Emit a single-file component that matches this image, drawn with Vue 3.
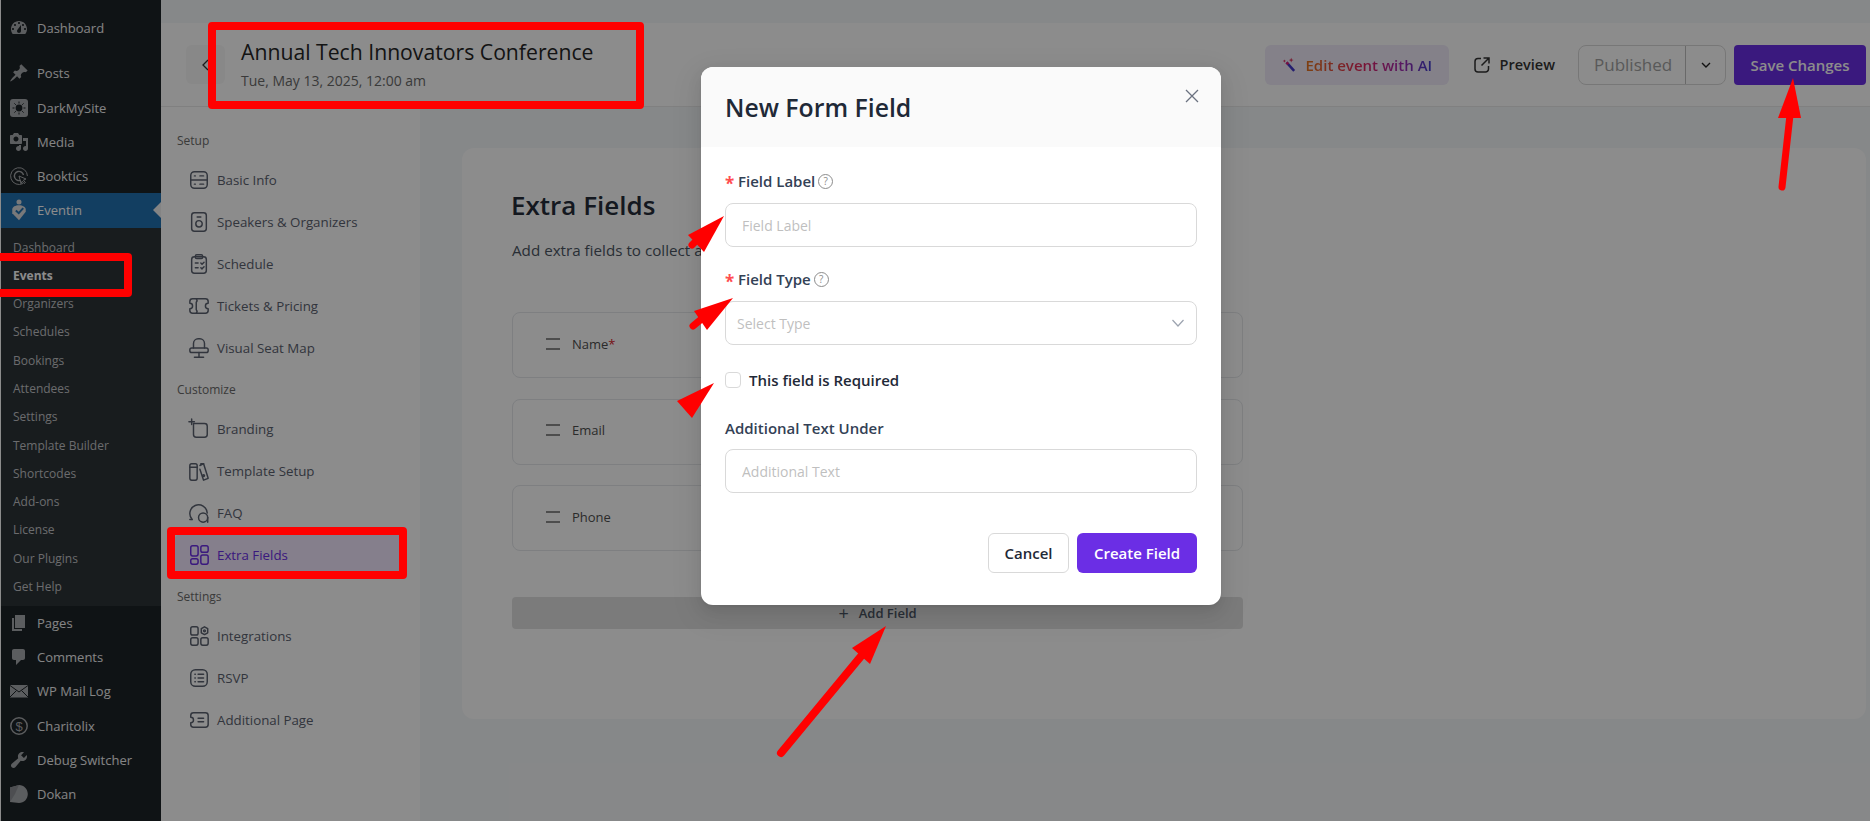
<template>
  <div class="page">
    <aside class="wp-menu">
      <template v-for="item in wpMenu" :key="item.name">
        <div class="wp-item" :class="{ active: item.active, gap: item.gap }">
          <span class="wp-icon">
            <svg v-if="item.kind === 'dashicon'" viewBox="0 0 20 20" width="20" height="20">
              <path :d="item.d" fill="#a7aaad" fill-rule="evenodd" />
            </svg>
            <svg v-else-if="item.kind === 'sun'" viewBox="0 0 20 20" width="20" height="20">
              <rect x="1" y="1" width="18" height="18" rx="3" fill="#a7aaad" />
              <circle cx="10" cy="10" r="3.4" fill="#1d2327" />
              <path d="M10 3.5v2M10 14.5v2M3.5 10h2M14.5 10h2M5.4 5.4l1.4 1.4M13.2 13.2l1.4 1.4M5.4 14.6l1.4-1.4M13.2 6.8l1.4-1.4" stroke="#1d2327" stroke-width="1" />
            </svg>
            <svg v-else-if="item.kind === 'target'" viewBox="0 0 20 20" width="20" height="20" fill="none" stroke="#a7aaad">
              <path d="M14 17.5A8.4 8.4 0 1 1 18.4 10" stroke-width="1" />
              <path d="M11.6 14.3A4.6 4.6 0 1 1 14.5 9" stroke-width="1.4" />
              <path d="M10 10l7 3-2.6 1.2 2 2.4-1.2 1-2-2.4L12 17.6z" stroke-width="1" />
            </svg>
            <svg v-else-if="item.kind === 'eventin'" viewBox="0 0 20 24" width="18" height="22">
              <circle cx="10" cy="3" r="2.8" fill="#dcdcde" />
              <path d="M2.500 11.500C2.500 8.500 6 6.800 10 6.800s7.500 2 7.500 4.700v2.500L10 23.500 2.500 15.500z" fill="#dcdcde" />
              <path d="M6.500 12.500l3.200 3 5-5.500" fill="none" stroke="#2271b1" stroke-width="2.200" />
            </svg>
            <svg v-else-if="item.kind === 'mail'" viewBox="0 0 20 20" width="20" height="20">
              <rect x="1" y="4" width="18" height="12.5" fill="#a7aaad" />
              <path d="M1 4.5l9 6.5 9-6.5M1 16l6.5-6.5M19 16l-6.5-6.5" fill="none" stroke="#1d2327" stroke-width="1" />
            </svg>
            <svg v-else-if="item.kind === 'dollar'" viewBox="0 0 20 20" width="20" height="20">
              <circle cx="10" cy="10" r="8.2" fill="none" stroke="#a7aaad" stroke-width="1.5" />
              <text x="10" y="14.6" text-anchor="middle" font-size="13" font-family="Liberation Sans, sans-serif" fill="#a7aaad">$</text>
            </svg>
            <svg v-else viewBox="0 0 20 20" width="20" height="20">
              <path d="M1 3.500L10 1c5 0 8.800 4 8.800 9s-3.800 9-8.800 9c-3 0-6-1-9-1z" fill="#a7aaad" />
              <path d="M1 3.500L10 1 6 10l-5 8z" fill="#8c8f94" />
            </svg>
          </span>
          <span class="wp-name">{{ item.name }}</span>
          <span v-if="item.active" class="wp-notch"></span>
        </div>
        <div v-if="item.active" class="wp-sub">
          <div v-for="sub in wpSubmenu" :key="sub" class="wp-sub-item" :class="{ current: sub === 'Events' }">{{ sub }}</div>
        </div>
      </template>
    </aside>

    <main class="main">
      <div class="top-band"></div>
      <header class="event-bar">
        <button class="back-btn">
          <svg viewBox="0 0 16 16" width="16" height="16"><path d="M10 3L5 8l5 5" fill="none" stroke="#333" stroke-width="1.3" /></svg>
        </button>
        <div class="event-head">
          <div class="event-title">Annual Tech Innovators Conference</div>
          <div class="event-date">Tue, May 13, 2025, 12:00 am</div>
        </div>
        <div class="event-actions">
          <button class="ai-btn">
            <svg viewBox="0 0 20 20" width="17" height="17">
              <path d="M6.500 7.500l9 10" stroke="#4338ca" stroke-width="3" />
              <path d="M6.500 7.500l2 2.200" stroke="#e11d74" stroke-width="3" />
              <path d="M12 2l.8 2 2 .8-2 .8-.8 2-.8-2-2-.8 2-.8zM4 4l.6 1.400L6 6l-1.400.6L4 8l-.6-1.400L2 6l1.400-.6z" fill="#d9365f" />
            </svg>
            <span class="ai-text">Edit event with AI</span>
          </button>
          <button class="preview-btn">
            <svg viewBox="0 0 18 18" width="18" height="18" fill="none" stroke="#333" stroke-width="1.5">
              <path d="M8 2.500H5a3 3 0 0 0-3 3V13a3 3 0 0 0 3 3h7.500a3 3 0 0 0 3-3v-3M10.500 2H16v5.500M16 2L8.500 9.500" />
            </svg>
            Preview
          </button>
          <div class="status-group">
            <span class="status-name">Published</span>
            <span class="status-caret">
              <svg viewBox="0 0 12 12" width="12" height="12"><path d="M2 4l4 4 4-4" fill="none" stroke="#222" stroke-width="1.400" /></svg>
            </span>
          </div>
          <button class="save-btn">Save Changes</button>
        </div>
      </header>

      <div class="workspace">
        <nav class="side-panel">
          <section v-for="group in panelGroups" :key="group.title" class="panel-group">
            <div class="panel-title">{{ group.title }}</div>
            <div v-for="link in group.links" :key="link.name" class="panel-link" :class="{ selected: link.name === 'Extra Fields' }">
              <svg viewBox="0 0 24 24" width="22" height="22" fill="none" stroke="currentColor" stroke-width="1.600" stroke-linecap="round" stroke-linejoin="round">
                <path v-for="d in link.paths" :key="d" :d="d" />
              </svg>
              <span>{{ link.name }}</span>
            </div>
          </section>
        </nav>

        <div class="content">
          <div class="card">
            <h1 class="card-title">Extra Fields</h1>
            <p class="card-sub">Add extra fields to collect additional information from your attendees</p>
            <div class="field-list">
              <div v-for="row in fieldRows" :key="row.name" class="field-row">
                <span class="drag"></span>
                <span class="field-name">{{ row.name }}<em v-if="row.required">*</em></span>
              </div>
            </div>
            <div class="add-bar"><span class="plus">+</span>Add Field</div>
          </div>
        </div>
      </div>
    </main>

    <div class="mask"></div>

    <div class="modal">
      <div class="modal-head">
        <h2>New Form Field</h2>
        <svg class="close" viewBox="0 0 16 16" width="16" height="16"><path d="M2 2l12 12M14 2L2 14" stroke="#6b7280" stroke-width="1.300" /></svg>
      </div>
      <form class="modal-body" @submit.prevent>
        <div class="form-label"><i>*</i>Field Label<span class="help">?</span></div>
        <input class="text-input" placeholder="Field Label" />
        <div class="form-label second"><i>*</i>Field Type<span class="help">?</span></div>
        <div class="select-box">
          <span>Select Type</span>
          <svg viewBox="0 0 14 14" width="14" height="14"><path d="M1.500 4l5.500 6 5.500-6" fill="none" stroke="#9ca3af" stroke-width="1.200" /></svg>
        </div>
        <label class="check-row"><span class="check"></span>This field is Required</label>
        <div class="form-label plain">Additional Text Under</div>
        <input class="text-input" placeholder="Additional Text" />
        <div class="modal-foot">
          <button class="cancel">Cancel</button>
          <button class="create">Create Field</button>
        </div>
      </form>
    </div>

    <!-- red markup drawn on top of the screenshot -->
    <svg class="markup" viewBox="0 0 1870 821" width="1870" height="821">
      <g fill="none" stroke="#ff0000" stroke-width="8" stroke-linejoin="round">
        <rect x="212" y="26" width="428" height="79" />
        <rect x="-4" y="257" width="132" height="36" />
        <rect x="171" y="531" width="232" height="44" />
      </g>
      <g stroke="#ff0000" stroke-linecap="round" fill="none">
        <path d="M1790 115L1782 187" stroke-width="7" />
        <path d="M862 655L781 753" stroke-width="8" />
        <path d="M705 232L692 245" stroke-width="7" />
        <path d="M710 312L693 326" stroke-width="7" />
      </g>
      <g fill="#ff0000">
        <polygon points="1793,78 1778,118 1801,118" />
        <polygon points="886,626 852,648 870,664" />
        <polygon points="724,216 688,235 704,252" />
        <polygon points="733,298 694,311 707,330" />
        <polygon points="714,383 677,401 692,418" />
      </g>
    </svg>
  </div>
</template>

<script setup>
const rr = (x, y, w, h, r) =>
  `M${x + r} ${y}h${w - 2 * r}a${r} ${r} 0 0 1 ${r} ${r}v${h - 2 * r}a${r} ${r} 0 0 1 -${r} ${r}h-${w - 2 * r}a${r} ${r} 0 0 1 -${r} -${r}v-${h - 2 * r}a${r} ${r} 0 0 1 ${r} -${r}z`
const circle = (cx, cy, r) => `M${cx - r} ${cy}a${r} ${r} 0 1 0 ${2 * r} 0a${r} ${r} 0 1 0 -${2 * r} 0z`

const wpMenu = [
  { name: 'Dashboard', kind: 'dashicon', d: 'M3.76 16h12.48c1.1-1.37 1.76-3.11 1.76-5 0-4.420-3.58-8-8-8s-8 3.580-8 8c0 1.890.66 3.630 1.760 5zM10 4c.55 0 1 .45 1 1s-.45 1-1 1-1-.45-1-1 .45-1 1-1zM6 6c.55 0 1 .45 1 1s-.45 1-1 1-1-.45-1-1 .45-1 1-1zm8 0c.55 0 1 .45 1 1s-.45 1-1 1-1-.45-1-1 .45-1 1-1zm-5.370 5.550L12 7v6c0 1.100-.9 2-2 2s-2-.9-2-2c0-.57.24-1.080.63-1.450zM4 10c.55 0 1 .45 1 1s-.45 1-1 1-1-.45-1-1 .45-1 1-1zm12 0c.55 0 1 .45 1 1s-.45 1-1 1-1-.45-1-1 .45-1 1-1z' },
  { name: 'Posts', gap: true, kind: 'dashicon', d: 'M10.440 3.020l1.820-1.820 6.360 6.350-1.830 1.820c-1.050-.68-2.480-.57-3.410.36l-.75.75c-.92.93-1.040 2.350-.35 3.410l-1.830 1.820-2.410-2.410-2.800 2.790c-.42.42-3.380 2.710-3.800 2.290s1.860-3.390 2.280-3.810l2.790-2.790L4.100 9.360l1.830-1.820c1.050.69 2.480.57 3.400-.36l.75-.75c.93-.92 1.050-2.350.36-3.410z' },
  { name: 'DarkMySite', kind: 'sun' },
  { name: 'Media', kind: 'dashicon', d: 'M13 11V4c0-.55-.45-1-1-1h-1.670L9 1H5L3.670 3H2c-.55 0-1 .45-1 1v7c0 .55.45 1 1 1h10c.55 0 1-.45 1-1zM7 4.500c1.380 0 2.500 1.120 2.500 2.500S8.380 9.500 7 9.500 4.500 8.380 4.500 7 5.620 4.500 7 4.500zM14 6h5v10.500c0 1.380-1.120 2.500-2.500 2.500S14 17.880 14 16.500s1.120-2.500 2.500-2.500c.17 0 .34.02.5.05V9h-3V6zm-4 8.050V13h2v3.500c0 1.380-1.120 2.500-2.500 2.500S7 17.880 7 16.500 8.120 14 9.500 14c.17 0 .34.02.5.05z' },
  { name: 'Booktics', kind: 'target' },
  { name: 'Eventin', kind: 'eventin', active: true },
  { name: 'Pages', kind: 'dashicon', d: 'M6 15V2h10v13H6zm-1 1h8v2H3V5h2v11z' },
  { name: 'Comments', kind: 'dashicon', d: 'M5 2h9c1.100 0 2 .9 2 2v7c0 1.100-.9 2-2 2h-2l-5 5v-5H5c-1.100 0-2-.9-2-2V4c0-1.100.9-2 2-2z' },
  { name: 'WP Mail Log', kind: 'mail' },
  { name: 'Charitolix', kind: 'dollar' },
  { name: 'Debug Switcher', kind: 'dashicon', d: 'M16.680 9.770c-1.340 1.340-3.300 1.670-4.950.99l-5.410 6.520c-.99.99-2.590.99-3.580 0s-.99-2.590 0-3.570l6.520-5.420c-.68-1.650-.35-3.610.99-4.950 1.280-1.280 3.120-1.620 4.720-1.060l-2.890 2.890 2.820 2.820 2.860-2.870c.53 1.580.18 3.390-1.080 4.650z' },
  { name: 'Dokan', kind: 'dokan' }
]

const wpSubmenu = ['Dashboard', 'Events', 'Organizers', 'Schedules', 'Bookings', 'Attendees', 'Settings', 'Template Builder', 'Shortcodes', 'Add-ons', 'License', 'Our Plugins', 'Get Help']

const panelGroups = [
  {
    title: 'Setup',
    links: [
      { name: 'Basic Info', paths: [rr(3, 3, 18, 18, 4), 'M3 12h18', 'M7 7.500h1', 'M13 7.500h4', 'M7 16.500h1', 'M13 16.500h4'] },
      { name: 'Speakers & Organizers', paths: [rr(4, 2, 16, 20, 3), circle(12, 14, 3.5), 'M10 6.500h4'] },
      { name: 'Schedule', paths: [rr(4, 4, 16, 18, 3), rr(8, 2, 8, 4, 1.500), 'M8 11h3', 'M8 16h3', 'M14 11l1.300 1.300 2.200-2.300', 'M14 16l1.300 1.300 2.200-2.300'] },
      { name: 'Tickets & Pricing', paths: ['M5 4h14a3 3 0 0 1 3 3v2a3 3 0 0 0 0 6v2a3 3 0 0 1-3 3H5a3 3 0 0 1-3-3v-2a3 3 0 0 0 0-6V7a3 3 0 0 1 3-3z', 'M9 4a3 3 0 0 1 0 4v8a3 3 0 0 1 0 4'] },
      { name: 'Visual Seat Map', paths: ['M6 12V7a5 5 0 0 1 5-5h2a5 5 0 0 1 5 5v5', rr(2, 12, 20, 5, 2), 'M12 17v5', 'M7 22h10'] }
    ]
  },
  {
    title: 'Customize',
    links: [
      { name: 'Branding', paths: ['M6 6h12a3 3 0 0 1 3 3v9a3 3 0 0 1-3 3H9a3 3 0 0 1-3-3z', 'M4 1v6', 'M1 4h6'] },
      { name: 'Template Setup', paths: [rr(2, 4, 8, 18, 2), 'M2 8h8', 'M13 6l4-2 5 16-5 2-4-12', 'M14 5v-1h3', circle(17, 17, 1)] },
      { name: 'FAQ', paths: ['M4.500 19A9.500 9.500 0 1 1 21 12', 'M4.500 19l-2.500 0', circle(16.500, 17, 5), 'M21.500 22v-5'] },
      { name: 'Extra Fields', paths: [rr(3, 2, 8, 11, 2), rr(14, 2, 8, 7, 2), rr(3, 16, 8, 6, 2), rr(14, 12, 8, 10, 2)] }
    ]
  },
  {
    title: 'Settings',
    links: [
      { name: 'Integrations', paths: [rr(3, 2, 8, 9, 2), rr(3, 14, 8, 8, 2), rr(14, 14, 8, 8, 2), 'M18 2l3.500 2v4.500l-3.500 2-3.500-2V4z', circle(18, 6.300, 1)] },
      { name: 'RSVP', paths: [rr(3, 3, 18, 18, 5), 'M11 8h6', 'M11 12h6', 'M11 16h6', 'M7.500 8h.5', 'M7.500 12h.5', 'M7.500 16h.5'] },
      { name: 'Additional Page', paths: ['M6 4h13a3 3 0 0 1 3 3v10a3 3 0 0 1-3 3H6a3 3 0 0 1-3-3v-2a3 3 0 0 0 0-6V7a3 3 0 0 1 3-3z', 'M11 10h6', 'M11 14h6'] }
    ]
  }
]

const fieldRows = [
  { name: 'Name', required: true },
  { name: 'Email' },
  { name: 'Phone' }
]
</script>

<style>
html, body { margin: 0; background: #f5f7fa; }
</style>

<style scoped>
.page {
  position: relative;
  display: flex;
  width: 1870px;
  height: 821px;
  padding-left: 1px;
  box-sizing: border-box;
  overflow: hidden;
  background: #fff;
  font-family: "Open Sans", "Noto Sans", sans-serif;
}

/* wp admin menu */
.wp-menu {
  width: 160px;
  flex: none;
  padding-top: 11px;
  background: #1d2327;
  box-sizing: border-box;
}
.wp-item {
  position: relative;
  display: flex;
  align-items: center;
  height: 34.25px;
  color: #f0f0f1;
  font-size: 13px;
}
.wp-item.gap { margin-top: 11px; }
.wp-item.active { background: #2271b1; color: #fff; }
.wp-icon {
  display: flex;
  justify-content: center;
  width: 36px;
  flex: none;
}
.wp-notch {
  position: absolute;
  right: 0;
  top: 9px;
  border: 8px solid transparent;
  border-right-color: #f0f0f1;
  border-left: 0;
}
.wp-sub {
  padding: 6px 0 4.300px;
  background: #2c3338;
}
.wp-sub-item {
  height: 28.300px;
  line-height: 28px;
  padding-left: 12px;
  font-size: 12px;
  color: #c3c4c7;
}
.wp-sub-item.current { color: #fff; font-weight: 700; }

/* main column */
.main {
  flex: 1;
  display: flex;
  flex-direction: column;
  min-width: 0;
  background: #f5f7fa;
}
.top-band { height: 23px; flex: none; }
.event-bar {
  display: flex;
  align-items: center;
  flex: none;
  height: 84px;
  padding: 0 4px 0 25px;
  box-sizing: border-box;
  background: #fff;
  border-bottom: 1px solid #eaeaea;
}
.back-btn {
  width: 39px;
  height: 39px;
  margin-right: 16px;
  padding: 0;
  display: flex;
  align-items: center;
  justify-content: center;
  border: 0;
  border-radius: 6px;
  background: #f7f7f7;
}
.event-title {
  font-size: 21.200px;
  font-weight: 500;
  line-height: 28px;
  color: #262626;
}
.event-date {
  margin-top: 5px;
  font-size: 14px;
  line-height: 20px;
  color: #6b6b6b;
}
.event-actions {
  display: flex;
  align-items: center;
  margin-left: auto;
}
.event-actions button { font-family: inherit; }
.ai-btn {
  display: flex;
  align-items: center;
  gap: 8px;
  width: 184px;
  height: 40px;
  padding: 0 0 0 16px;
  border: 0;
  border-radius: 6px;
  background: #f0ebfa;
  font-size: 15px;
  font-weight: 600;
  box-sizing: border-box;
  white-space: nowrap;
}
.ai-text {
  background: linear-gradient(90deg, #e5761e, #e0245e 45%, #a62bb0 75%, #3f3fd0);
  -webkit-background-clip: text;
  background-clip: text;
  color: transparent;
}
.preview-btn {
  display: flex;
  align-items: center;
  gap: 9px;
  margin: 0 23px 0 24px;
  padding: 0;
  border: 0;
  background: none;
  font-size: 14.500px;
  font-weight: 600;
  color: #333;
}
.status-group {
  display: flex;
  width: 148px;
  height: 40px;
  margin-right: 8px;
  box-sizing: border-box;
  border: 1px solid #d9d9d9;
  border-radius: 8px;
  font-size: 17px;
  color: #a3a3a3;
}
.status-name {
  flex: 1;
  padding-left: 15px;
  line-height: 38px;
}
.status-caret {
  width: 39px;
  display: flex;
  align-items: center;
  justify-content: center;
  border-left: 1px solid #bfbfbf;
}
.save-btn {
  width: 132px;
  height: 40px;
  padding: 0;
  border: 0;
  border-radius: 4px;
  background: #6b2ee5;
  color: #fff;
  font-size: 15px;
  font-weight: 600;
}

.workspace {
  flex: 1;
  display: flex;
  min-height: 0;
}
.side-panel {
  width: 259px;
  flex: none;
  padding: 14px 13px 0 14px;
  box-sizing: border-box;
  background: #fff;
}
.panel-title {
  height: 39px;
  padding-left: 2px;
  line-height: 39px;
  font-size: 12px;
  font-weight: 500;
  color: #6b6b6b;
}
.panel-link {
  display: flex;
  align-items: center;
  gap: 7px;
  height: 40px;
  margin-bottom: 2px;
  padding-left: 13px;
  border-radius: 4px;
  font-size: 13.300px;
  color: #5b6270;
}
.panel-link svg { flex: none; }
.panel-link.selected {
  background: #f2e7ff;
  color: #6b2ee5;
}
.content {
  flex: 1;
  min-width: 0;
  padding: 41px 4px 0 42px;
}
.card {
  height: 571px;
  padding: 38px 50px 0;
  box-sizing: border-box;
  border-radius: 12px;
  background: #fff;
}
.card-title {
  margin: 0 0 0 -1px;
  font-size: 26px;
  font-weight: 600;
  line-height: 38px;
  color: #262d3a;
}
.card-sub {
  margin: 14px 0 0;
  font-size: 15.200px;
  line-height: 24px;
  color: #4b5563;
  white-space: nowrap;
}
.field-list {
  width: 731px;
  margin-top: 50px;
  display: flex;
  flex-direction: column;
  gap: 20.500px;
}
.field-row {
  display: flex;
  align-items: center;
  height: 66px;
  padding: 0 0 3px 33px;
  box-sizing: border-box;
  border: 1px solid #e5e7eb;
  border-radius: 8px;
}
.drag {
  width: 14px;
  height: 8px;
  margin-right: 12px;
  border-top: 2px solid #8c8c8c;
  border-bottom: 2px solid #8c8c8c;
}
.field-name {
  font-size: 13px;
  font-weight: 500;
  color: #4f4f4f;
}
.field-name em {
  font-style: normal;
  color: #d9242a;
}
.add-bar {
  width: 731px;
  height: 32px;
  margin-top: 46px;
  display: flex;
  align-items: center;
  justify-content: center;
  gap: 10px;
  border-radius: 4px;
  background: #e1e1e1;
  font-size: 13px;
  font-weight: 600;
  color: #4b5563;
}
.plus { font-size: 18px; font-weight: 400; line-height: 1; }

.mask {
  position: absolute;
  inset: 0;
  background: rgba(0, 0, 0, 0.45);
}

/* dialog */
.modal {
  position: absolute;
  left: 701px;
  top: 67px;
  width: 520px;
  height: 538px;
  border-radius: 12px;
  background: #fff;
  overflow: hidden;
  box-shadow: 0 6px 16px rgba(0, 0, 0, 0.08), 0 3px 6px -4px rgba(0, 0, 0, 0.12), 0 9px 28px 8px rgba(0, 0, 0, 0.05);
}
.modal-head {
  position: relative;
  height: 80px;
  padding: 22px 24px 0;
  box-sizing: border-box;
  background: #fafafa;
}
.modal-head h2 {
  margin: 0;
  font-size: 24.800px;
  font-weight: 600;
  line-height: 36px;
  color: #1f2937;
}
.close {
  position: absolute;
  right: 21px;
  top: 21px;
}
.modal-body {
  display: flex;
  flex-direction: column;
  padding: 24px 24px 0;
}
.form-label {
  display: flex;
  align-items: center;
  height: 20px;
  margin-bottom: 12px;
  font-size: 15px;
  font-weight: 600;
  color: #334155;
}
.form-label.second { margin-top: 22px; }
.form-label.plain { margin: 30px 0 11px; }
.form-label i {
  width: 13px;
  padding-top: 5px;
  font-style: normal;
  font-size: 17px;
  line-height: 20px;
  font-weight: 700;
  color: #ff4d4f;
}
.help {
  display: inline-flex;
  align-items: center;
  justify-content: center;
  width: 15px;
  height: 15px;
  margin-left: 3px;
  box-sizing: border-box;
  border: 1px solid #8c8c8c;
  border-radius: 50%;
  font-size: 10px;
  font-weight: 400;
  color: #8c8c8c;
}
.text-input {
  height: 44px;
  padding: 0 16px;
  box-sizing: border-box;
  border: 1px solid #d9d9d9;
  border-radius: 8px;
  outline: none;
  font-family: inherit;
  font-size: 14px;
}
.text-input::placeholder { color: #bfbfbf; }
.select-box {
  display: flex;
  align-items: center;
  justify-content: space-between;
  height: 44px;
  padding: 0 11px;
  box-sizing: border-box;
  border: 1px solid #d9d9d9;
  border-radius: 8px;
  font-size: 14px;
  color: #bfbfbf;
}
.check-row {
  display: flex;
  align-items: center;
  gap: 8px;
  margin-top: 27px;
  height: 16px;
  font-size: 15px;
  font-weight: 600;
  color: #1f2937;
}
.check {
  width: 16px;
  height: 16px;
  box-sizing: border-box;
  border: 1px solid #d9d9d9;
  border-radius: 4px;
}
.modal-foot {
  display: flex;
  justify-content: flex-end;
  gap: 8px;
  margin-top: 40px;
}
.modal-foot button {
  height: 40px;
  padding: 0;
  border-radius: 6px;
  font-family: inherit;
  font-size: 15px;
  font-weight: 600;
  box-sizing: border-box;
}
.cancel {
  width: 81px;
  border: 1px solid #d9d9d9;
  background: #fff;
  color: #1f2937;
}
.create {
  width: 120px;
  border: 0;
  background: #6b2ee5;
  color: #fff;
}

.markup {
  position: absolute;
  left: 0;
  top: 0;
  pointer-events: none;
}
</style>
